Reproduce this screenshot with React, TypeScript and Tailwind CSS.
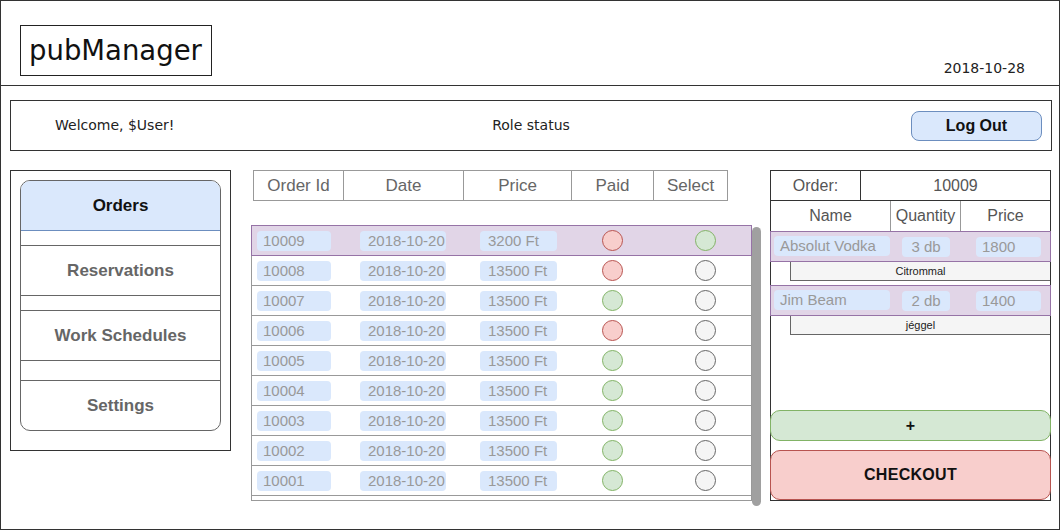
import React from 'react';

type Dot = 'red' | 'green' | 'gray';

interface OrderRow {
  id: string;
  date: string;
  price: string;
  paid: Dot;
  select: Dot;
}

const orders: OrderRow[] = [
  { id: '10009', date: '2018-10-20', price: '3200 Ft', paid: 'red', select: 'green' },
  { id: '10008', date: '2018-10-20', price: '13500 Ft', paid: 'red', select: 'gray' },
  { id: '10007', date: '2018-10-20', price: '13500 Ft', paid: 'green', select: 'gray' },
  { id: '10006', date: '2018-10-20', price: '13500 Ft', paid: 'red', select: 'gray' },
  { id: '10005', date: '2018-10-20', price: '13500 Ft', paid: 'green', select: 'gray' },
  { id: '10004', date: '2018-10-20', price: '13500 Ft', paid: 'green', select: 'gray' },
  { id: '10003', date: '2018-10-20', price: '13500 Ft', paid: 'green', select: 'gray' },
  { id: '10002', date: '2018-10-20', price: '13500 Ft', paid: 'green', select: 'gray' },
  { id: '10001', date: '2018-10-20', price: '13500 Ft', paid: 'green', select: 'gray' },
];

const items = [
  { name: 'Absolut Vodka', qty: '3 db', price: '1800', note: 'Citrommal' },
  { name: 'Jim Beam', qty: '2 db', price: '1400', note: 'jéggel' },
];

function Circle({ kind }: { kind: Dot }) {
  const style =
    kind === 'red'
      ? 'bg-[#f8cecc] border-[#b85450]'
      : kind === 'green'
        ? 'bg-[#d5e8d4] border-[#82b366]'
        : 'bg-[#f5f5f5] border-[#666666]';
  return <div className={`w-[21px] h-[21px] rounded-full border ${style}`} />;
}

function Pill({ text, className }: { text: string; className: string }) {
  return (
    <div className={`h-[20px] rounded-[4px] bg-[#dae8fc] text-[#999999] text-[15px] leading-[20px] whitespace-nowrap ${className}`}>
      {text}
    </div>
  );
}

const navItems = ['Reservations', 'Work Schedules', 'Settings'];

export default function App() {
  return (
    <div className="w-[1061px] h-[531px] bg-white overflow-hidden font-['Liberation_Sans',Arial,sans-serif]">
      <div className="w-[1060px] h-[530px] border border-[#333333] flex flex-col">
        {/* Header */}
        <div className="h-[85px] shrink-0 border-b border-[#333333] flex items-start justify-between">
          <div className="ml-[19px] mt-[24px] w-[192px] h-[51px] border border-[#222222] flex items-center pl-[8px] font-['DejaVu_Sans',Verdana,sans-serif] text-[27.5px] text-[#111111]">
            pubManager
          </div>
          <div className="mt-[57px] mr-[34px] font-['DejaVu_Sans',Verdana,sans-serif] text-[14px] text-[#222222]">
            2018-10-28
          </div>
        </div>

        {/* Welcome bar */}
        <div className="mt-[14px] ml-[9px] w-[1042px] h-[51px] shrink-0 border border-[#333333] flex items-center font-['DejaVu_Sans',Verdana,sans-serif] text-[14px] text-[#222222]">
          <div className="w-[256px] pl-[44px]">Welcome, $User!</div>
          <div className="w-[528px] text-center">Role status</div>
          <div className="ml-[116px] w-[131px] h-[30px] rounded-[8px] border border-[#6c8ebf] bg-[#dae8fc] flex items-center justify-center font-['Liberation_Sans',Arial,sans-serif] font-bold text-[16px] text-[#111111]">
            Log Out
          </div>
        </div>

        {/* Main */}
        <div className="mt-[19px] flex items-start">
          {/* Sidebar */}
          <div className="ml-[9px] w-[221px] h-[281px] border border-[#333333] pt-[9px] pl-[9px]">
            <div className="w-[201px] h-[251px] rounded-[10px] border border-[#666666] overflow-hidden flex flex-col font-bold text-[17px]">
              <div className="h-[50px] shrink-0 bg-[#dae8fc] border-b border-[#6c8ebf] flex items-center justify-center text-[#111111] pt-[1px]">
                Orders
              </div>
              <div className="h-[15px] shrink-0 border-b border-[#666666]" />
              <div className="h-[50px] shrink-0 border-b border-[#666666] flex items-center justify-center text-[#666666] pt-[1px]">
                {navItems[0]}
              </div>
              <div className="h-[15px] shrink-0 border-b border-[#666666]" />
              <div className="h-[50px] shrink-0 border-b border-[#666666] flex items-center justify-center text-[#666666] pt-[1px]">
                {navItems[1]}
              </div>
              <div className="h-[20px] shrink-0 border-b border-[#666666]" />
              <div className="flex-1 flex items-center justify-center text-[#666666]">{navItems[2]}</div>
            </div>
          </div>

          {/* Orders table */}
          <div className="ml-[20px] w-[510px] flex flex-col">
            <div className="ml-[2px] w-[475px] h-[31px] border border-[#999999] flex text-[17px] text-[#666666]">
              <div className="w-[90px] border-r border-[#999999] flex items-center justify-center">Order Id</div>
              <div className="w-[120px] border-r border-[#999999] flex items-center justify-center">Date</div>
              <div className="w-[108px] border-r border-[#999999] flex items-center justify-center">Price</div>
              <div className="w-[82px] border-r border-[#999999] flex items-center justify-center">Paid</div>
              <div className="flex-1 flex items-center justify-center">Select</div>
            </div>

            <div className="mt-[24px] flex items-start">
              <div className="w-[502px] h-[276px] border border-[#999999] border-t-0 flex flex-col">
                {orders.map((o, i) => (
                  <div
                    key={o.id}
                    className={`h-[30px] shrink-0 flex items-center ${
                      i === 0
                        ? 'bg-[#e1d5e7] border border-[#9673a6] -mx-px h-[31px]'
                        : 'border-b border-[#999999]'
                    }`}
                  >
                    <Pill text={o.id} className="ml-[5px] w-[74px] pl-[6px]" />
                    <Pill text={o.date} className="ml-[29px] w-[86px] pl-[8px] mt-[1px]" />
                    <Pill text={o.price} className="ml-[34px] w-[77px] pl-[8px] mt-[1px]" />
                    <div className="ml-[45px]">
                      <Circle kind={o.paid} />
                    </div>
                    <div className="ml-[72px]">
                      <Circle kind={o.select} />
                    </div>
                  </div>
                ))}
              </div>
              <div className="mt-[2px] w-[9px] h-[279px] rounded-full bg-[#a0a0a0]" />
            </div>
          </div>

          {/* Order panel */}
          <div className="ml-[9px] w-[281px] h-[331px] border border-[#333333] flex flex-col">
            <div className="h-[30px] shrink-0 flex border-b border-[#333333] text-[16px] text-[#555555]">
              <div className="w-[90px] border-r border-[#333333] flex items-center justify-center">Order:</div>
              <div className="flex-1 flex items-center justify-center">10009</div>
            </div>
            <div className="h-[30px] shrink-0 flex text-[16px] text-[#555555]">
              <div className="w-[120px] border-r border-[#999999] flex items-center justify-center">Name</div>
              <div className="w-[70px] border-r border-[#999999] flex items-center justify-center">Quantity</div>
              <div className="flex-1 flex items-center justify-center">Price</div>
            </div>
            {items.map((it, i) => (
              <div key={it.name} className={i > 0 ? 'mt-[4px]' : ''}>
                <div className="h-[31px] -mx-px bg-[#e1d5e7] border border-[#9673a6] flex items-center">
                  <Pill text={it.name} className="ml-[3px] w-[116px] pl-[6px] -mt-[2px]" />
                  <Pill text={it.qty} className="ml-[12px] w-[48px] text-center" />
                  <Pill text={it.price} className="ml-[26px] w-[65px] pl-[6px]" />
                </div>
                <div className="ml-[19px] h-[19px] border border-t-0 border-r-0 border-[#666666] bg-[#f5f5f5] flex items-center justify-center text-[11px] text-[#222222]">
                  {it.note}
                </div>
              </div>
            ))}
            <div className="flex-1" />
            <div className="-mx-px h-[31px] shrink-0 rounded-[10px] border border-[#82b366] bg-[#d5e8d4] flex items-center justify-center font-bold text-[16px] text-[#111111]">
              +
            </div>
            <div className="-mx-px mt-[9px] h-[50px] shrink-0 rounded-[10px] border border-[#b85450] bg-[#f8cecc] flex items-center justify-center font-bold text-[16px] text-[#111111] tracking-[0.3px]">
              CHECKOUT
            </div>
          </div>
        </div>
      </div>
    </div>
  );
}
